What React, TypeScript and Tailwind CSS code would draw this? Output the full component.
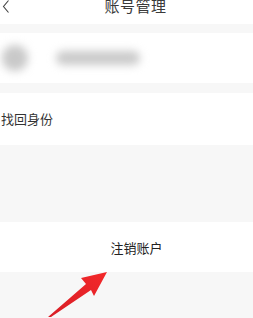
import React from "react";

export default function App() {
  const font = { fontFamily: '"Noto Sans CJK SC", "Noto Sans", sans-serif' };
  return (
    <div className="w-[253px] h-[318px] overflow-hidden bg-[#f7f7f7] relative" style={font}>
      {/* header */}
      <div className="h-[24px] bg-white relative flex items-start justify-center">
        <svg className="absolute left-[2px] top-[0px]" width="8" height="14" viewBox="0 0 8 14">
          <path d="M6.5 0.5 L1.5 6.5 L6.5 12.5" fill="none" stroke="#444" strokeWidth="1.1" />
        </svg>
        <div className="text-[15px] leading-[15px] text-[#3a3a3a] mt-[-2px] ml-[18px] tracking-[0.5px]">账号管理</div>
      </div>
      <div className="h-[9px]" />
      {/* profile row */}
      <div className="h-[50px] bg-white flex items-center">
        <div className="w-[26px] h-[26px] rounded-full bg-[#c9c9c9] ml-[2px] blur-[4px]" />
        <div className="w-[84px] h-[14px] rounded-full bg-[#cacaca] ml-[28px] blur-[4px]" />
      </div>
      <div className="h-[10px]" />
      {/* find identity */}
      <div className="h-[52px] bg-white flex items-center">
        <div className="text-[13px] leading-[13px] text-[#333] ml-[1px] mt-[-2px]">找回身份</div>
      </div>
      <div className="h-[77px]" />
      {/* cancel account */}
      <div className="h-[50px] bg-white flex items-center justify-center">
        <div className="text-[13px] leading-[13px] text-[#222] ml-[20px]">注销账户</div>
      </div>
      {/* red arrow */}
      <svg className="absolute left-0 top-0" width="253" height="318" viewBox="0 0 253 318">
        <defs>
          <linearGradient id="g" x1="0" y1="1" x2="1" y2="0">
            <stop offset="0" stopColor="#d81e26" />
            <stop offset="1" stopColor="#f3282a" />
          </linearGradient>
        </defs>
        <path d="M48 317 L86 284 L81 278 L107 272 L94 296 L91 290 L51 317 Z" fill="url(#g)" />
      </svg>
    </div>
  );
}
